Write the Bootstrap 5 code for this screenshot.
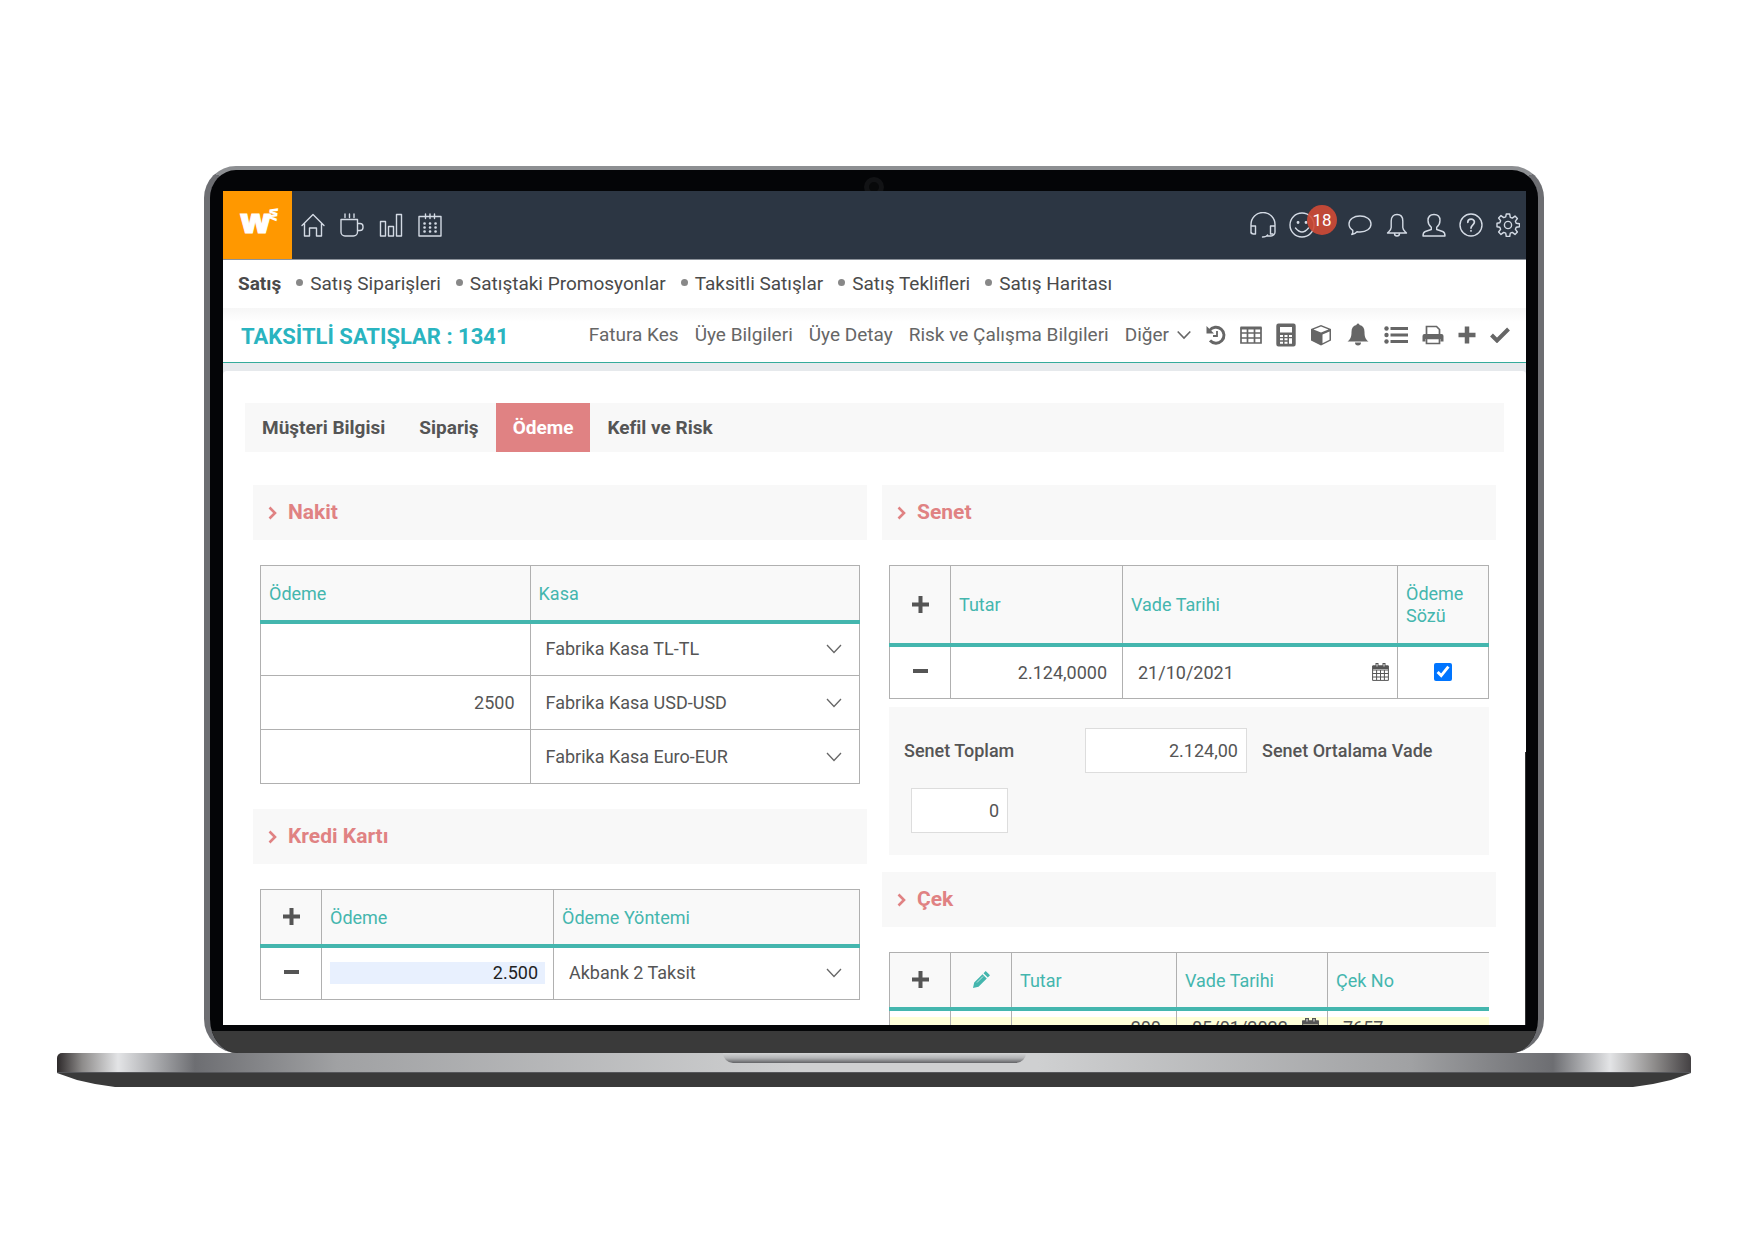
<!DOCTYPE html>
<html lang="tr">
<head>
<meta charset="utf-8">
<meta name="viewport" content="width=device-width, initial-scale=1">
<title>Taksitli Satışlar</title>
<link href="https://cdn.jsdelivr.net/npm/bootstrap@5.3.0/dist/css/bootstrap.min.css" rel="stylesheet">
<style>
  body { font-family: Roboto, "Liberation Sans", sans-serif; font-size: 18px; line-height: 24px; color: #555; background: #fff; }
  a { color: inherit; text-decoration: none; }
  svg { display: block; }
  .stage { padding: 166px 57px 0; }

  /* laptop */
  .lid { margin: 0 147px; border-style: solid; border-color: #8d8f92 #6d6e72 #6d6e72; border-width: 4px 6px 0; border-radius: 32px 32px 34px 34px; background: #040507; padding-top: 21px; position: relative; overflow: hidden; }
  .camera { width: 20px; height: 20px; border-radius: 50%; border: 5px solid #121315; background: #08090a; position: absolute; top: 7px; left: calc(50% - 10px); }
  .display { margin: 0 12px 0 13px; aspect-ratio: 1303 / 834; overflow: hidden; background: #fff; position: relative; }
  .thumb { position: absolute; right: 0; top: 561px; bottom: 0; width: 1px; background: #333; }
  .chin { margin-top: 6px; height: 22px; background: #3a3a3a; }
  .deck { height: 20px; border-radius: 5px 5px 0 0; border-bottom: 1px solid #55565a;
    background: linear-gradient(90deg, #2d292a 0, #8d8b8a 25px, #e3e4e6 61px, #6d6e72 138px, #a0a1a3 280px, #cfd0d1 45%, #cfd0d1 60%, #a0a1a3 calc(100% - 280px), #6d6e72 calc(100% - 138px), #e3e4e6 calc(100% - 81px), #8d8b8a calc(100% - 36px), #444143 100%); }
  .notch { width: 303px; height: 10px; border-radius: 0 0 10px 10px; background: linear-gradient(#d3d4d5, #b2b3b5 50%, #626366); }
  .foot { height: 14px; background: #3a3a3a; clip-path: polygon(0 0, 100% 0, calc(100% - 20px) 7px, calc(100% - 38px) 11px, calc(100% - 58px) 100%, 58px 100%, 38px 11px, 20px 7px); }

  /* top bar */
  .topbar { background: #2c3643; height: 69px; color: #d3dae4; border-bottom: 1px solid #8c929a; }
  .brand { width: 69px; height: 68px; background: #ff9800; color: #fff; }
  .brand text { font-family: "Open Sans", sans-serif; font-weight: 800; fill: #fff; stroke: #fff; }
  .topbar a { display: block; }
  .quick { gap: 15px; padding-left: 9px; }
  .status { gap: 13px; padding-right: 6px; }
  .counter { position: absolute; left: 18px; top: -7px; width: 30px; height: 30px; font-size: 17px; font-weight: 400; line-height: 30px; padding: 0; background: rgba(208, 74, 54, .9); }
  .mood { margin-right: 20px; }
  .ln { fill: none; stroke: currentColor; stroke-width: 1.4; stroke-linejoin: round; stroke-linecap: round; }

  /* menu rows */
  .crumbs { height: 48px; padding: 0 0 1px 15px; color: #4a4a4a; font-size: 19px; }
  .crumbs li + li::before { content: ""; display: inline-block; width: 7px; height: 7px; border-radius: 50%; background: #888; margin: 0 7px 4px 15px; }
  .crumbs li { white-space: nowrap; }
  .titlebar { height: 55px; padding: 0 16px 0 18px; background: linear-gradient(#f6f6f6, #fff 14px); border-bottom: 1px solid #35ab9b; color: #666; }
  .titlebar h1 { font-size: 22px; line-height: 28px; font-weight: 700; color: #2ab4c0; margin: 0; padding-top: 3px; }
  .acts { gap: 16px; white-space: nowrap; font-size: 19px; padding-bottom: 1px; }
  .tools { gap: 14px; padding-left: 15px; }
  .plain { background: none; border: 0; padding: 0; color: inherit; display: block; }
  .sheet { background: #e6e9ec; padding-top: 8px; }
  .page { background: #fff; border-radius: 4px 4px 0 0; padding: 32px 22px 0; }

  /* tabs */
  .tabs { background: #f8f8f8; }
  .tabs .nav-link { color: #555; font-size: 19px; font-weight: 700; padding: 13px 17px 12px; border-radius: 0; }
  .tabs .nav-link.active { background: #e08283; color: #fff; }

  /* sections */
  .cols { padding: 33px 8px 0; gap: 15px; }
  .cols > div { flex: 1 1 0; min-width: 0; }
  .sec { background: #f8f8f8; color: #e08283; font-size: 21px; line-height: 25px; font-weight: 700; margin: 0; padding: 15px 15px; gap: 11px; }
  .body-in { padding: 25px 7px 25px; }
  .grid { width: 100%; table-layout: fixed; border-collapse: collapse; color: #555; }
  .grid th, .grid td { border: 1px solid #b0b0b0; height: 54px; padding: 0 8px; vertical-align: middle; }
  .grid th { background: #f9f9f9; color: #44b6ae; font-weight: 400; height: 56px; padding-top: 2px; border-bottom: 4px solid #44b6ae; line-height: 22px; }
  .grid th.tall { height: 79px; }
  .grid .plain { margin: 0 auto; color: #555; }
  .grid th .plain { margin-bottom: 2px; }
  .grid .plain.teal { color: #44b6ae; }
  .cell { width: 100%; border: 0; background: transparent; color: #555; padding: 0 7px; height: 30px; outline: 0; }
  select.cell { appearance: none; background: url("data:image/svg+xml,%3Csvg xmlns='http://www.w3.org/2000/svg' viewBox='0 0 16 10'%3E%3Cpath d='M1 1l7 7.500 7-7.500' fill='none' stroke='%23666' stroke-width='1.300'/%3E%3C/svg%3E") no-repeat right 9px center / 16px 10px; }
  .filled { background: #e8f0fe; color: #222; height: 22px; }
  .tick { width: 18px; height: 18px; display: block; margin: 0 auto; accent-color: #0075ff; }
  .sum { background: #f8f8f8; margin-top: 8px; padding: 21px 15px 22px; gap: 15px; }
  .sum label { font-weight: 500; }
  .sum .first { width: 166px; }
  .box { border: 1px solid #ddd; background: #fff; height: 45px; width: 162px; padding: 0 8px; color: #555; }
  .box.sm { width: 97px; margin-left: 7px; }
  .after { padding-bottom: 17px; }
  .grid.cheques td { background: linear-gradient(#fff 6px, #ffffd9 6px); height: 36px; }
  .cheques tr > :last-child { border-right: 0; }
</style>
</head>
<body>
<main class="stage">
  <div class="lid">
    <div class="camera"></div>
    <div class="display">
      <header class="topbar d-flex align-items-center">
        <a class="brand" href="#" aria-label="W3">
          <svg width="69" height="68" viewBox="0 0 69 68"><text x="17" y="42" font-size="34" stroke-width="1">w</text><text x="47" y="16" font-size="15" stroke-width="0" transform="rotate(97 47 16)">w</text></svg>
        </a>
        <nav class="quick d-flex" aria-label="Kısayollar">
          <a href="#" aria-label="Ana sayfa"><svg class="ln" width="24" height="24" viewBox="0 0 24 24"><path d="M1 12.500L12 1.500l11 11M3.500 10.500v12.500h5v-8h7v8h5V10.500"/></svg></a>
          <a href="#" aria-label="Kahve"><svg class="ln" width="24" height="24" viewBox="0 0 24 24"><path d="M1 6.500h16.500V19a4 4 0 0 1-4 4H5a4 4 0 0 1-4-4zM17.500 10.500h2.500a3 3 0 0 1 3 3v1a3 3 0 0 1-3 3h-2.500M5 1v3.500M9.500 1v3.500M14 1v3.500"/></svg></a>
          <a href="#" aria-label="Raporlar"><svg class="ln" width="24" height="24" viewBox="0 0 24 24"><path d="M1.500 8.500h5V23h-5zM9.500 13.500h5V23h-5zM17.500 1.500h5V23h-5z"/></svg></a>
          <a href="#" aria-label="Takvim"><svg class="ln" width="24" height="24" viewBox="0 0 24 24"><path d="M1 3.500h22V23H1zM7.500 1v4.500M12 1v4.500M16.500 1v4.500"/><path d="M6.500 10.500h.1M12 10.500h.1M17.500 10.500h.1M6.500 14.500h.1M12 14.500h.1M17.500 14.500h.1M6.500 18.500h.1M12 18.500h.1M17.500 18.500h.1" stroke-width="2.600"/></svg></a>
        </nav>
        <nav class="status d-flex align-items-center ms-auto" aria-label="Durum">
          <a href="#" aria-label="Destek"><svg class="ln" width="26" height="26" viewBox="0 0 26 26"><path d="M1 21V12.500a12 12 0 0 1 24 0v7.500a4 4 0 0 1-4 4h-4M1 14h4.500v8H3.500A2.500 2.500 0 0 1 1 20zM25 14h-4.500v8H23M12.500 25q4 0 5-2"/></svg></a>
          <a class="mood position-relative" href="#" aria-label="Bildirim 18"><svg class="ln" width="26" height="26" viewBox="0 0 26 26"><circle cx="13" cy="13" r="12"/><path d="M6.500 16q6.500 8 13 0"/><path d="M9 10.500h.1M17 10.500h.1" stroke-width="2.800"/></svg><span class="counter badge rounded-circle">18</span></a>
          <a href="#" aria-label="Mesaj"><svg class="ln" width="24" height="24" viewBox="0 0 24 24"><path d="M12 3c6.300 0 11 3.400 11 8s-4.700 8-11 8c-1.200 0-2-.1-3-.3-1.400 1.600-3.200 2.700-5.200 2.800 1-1.300 1.300-2.700 1-4.200C2.400 15.800 1 13.600 1 11c0-4.600 4.700-8 11-8z"/></svg></a>
          <a href="#" aria-label="Alarm"><svg class="ln" width="24" height="24" viewBox="0 0 24 24"><path d="M12 1.500c3.600 0 5.800 2.500 5.800 6.500v6.500c0 2.500 1.700 3.500 3.700 5.500h-19c2-2 3.700-3 3.700-5.500V8c0-4 2.200-6.500 5.800-6.500zM9.500 20.500c0 3.300 5 3.300 5 0"/></svg></a>
          <a href="#" aria-label="Profil"><svg class="ln" width="24" height="24" viewBox="0 0 24 24"><path d="M12 1.500c4 0 6 2.500 6 6 0 3-1.500 5.200-3.300 6.800v2.200l6 2c1.600.6 2.300 2 2.300 4.500H1c0-2.500.7-3.900 2.300-4.500l6-2v-2.200C7.500 12.700 6 10.500 6 7.500c0-3.500 2-6 6-6z"/></svg></a>
          <a href="#" aria-label="Yardım"><svg class="ln" width="24" height="24" viewBox="0 0 24 24"><circle cx="12" cy="12" r="11"/><path d="M8.800 9.300c0-4.200 6.600-4.200 6.600-.2 0 2.600-3.400 2.900-3.400 6M12 17.700v.3" stroke-width="1.700"/></svg></a>
          <a href="#" aria-label="Ayarlar"><svg class="ln" width="24" height="24" viewBox="0 0 24 24"><circle cx="12" cy="12" r="3.600"/><path d="M10.300 1h3.400l.6 3.300 2 .8 2.700-2 2.400 2.400-2 2.700.8 2 3.300.6v2.900l-3.300.6-.8 2 2 2.700-2.400 2.400-2.700-2-2 .8-.6 3.300h-3.400l-.6-3.300-2-.8-2.700 2L2.600 19l2-2.700-.8-2L1 13.700v-3.400l2.800-.6.8-2-2-2.700L5 2.600l2.700 2 2-.8z"/></svg></a>
        </nav>
      </header>

      <nav aria-label="Satış menüsü">
        <ul class="crumbs list-unstyled d-flex align-items-center mb-0">
          <li><a class="fw-bold" href="#">Satış</a></li>
          <li><a href="#">Satış Siparişleri</a></li>
          <li><a href="#">Satıştaki Promosyonlar</a></li>
          <li><a href="#">Taksitli Satışlar</a></li>
          <li><a href="#">Satış Teklifleri</a></li>
          <li><a href="#">Satış Haritası</a></li>
        </ul>
      </nav>

      <div class="titlebar d-flex align-items-center">
        <h1 class="text-nowrap">TAKSİTLİ SATIŞLAR : 1341</h1>
        <nav class="acts d-flex ms-auto" aria-label="İşlemler">
          <a href="#">Fatura Kes</a>
          <a href="#">Üye Bilgileri</a>
          <a href="#">Üye Detay</a>
          <a href="#">Risk ve Çalışma Bilgileri</a>
          <a class="d-flex align-items-center" href="#">Diğer<svg class="ms-2" width="14" height="10" viewBox="0 0 14 10"><path d="M.7 1.500L7 8l6.300-6.500" fill="none" stroke="currentColor" stroke-width="1.600"/></svg></a>
        </nav>
        <div class="tools d-flex align-items-center">
          <button class="plain" aria-label="Geçmiş"><svg width="20" height="20" viewBox="0 0 20 20"><path d="M3.500 5.500A8 8 0 1 1 4 15.500" fill="none" stroke="currentColor" stroke-width="2.900"/><path d="M.5 1v7.500H8z" fill="currentColor"/><path d="M11 6v5H7" fill="none" stroke="currentColor" stroke-width="1.800"/></svg></button>
          <button class="plain" aria-label="Tablo"><svg width="22" height="20" viewBox="0 0 22 20"><path d="M1 3h20v15H1zM1 8h20M1 13h20M7.500 3v15M14.500 3v15" fill="none" stroke="currentColor" stroke-width="1.700"/><path d="M.5 1.500h21v3H.5z" fill="currentColor"/></svg></button>
          <button class="plain" aria-label="Hesap makinesi"><svg width="20" height="24" viewBox="0 0 20 24"><path fill="currentColor" fill-rule="evenodd" d="M2.500.5h15a2.200 2.200 0 0 1 2.200 2.200v18.600a2.200 2.200 0 0 1-2.200 2.200h-15A2.200 2.200 0 0 1 .3 21.300V2.700A2.200 2.200 0 0 1 2.500.5zM4 4v5.500h12V4zM4 12h3v2H4zM8.500 12h3v2h-3zM13 12h3v2h-3zM4 15.300h3v2H4zM8.500 15.300h3v2h-3zM13 15.300h3v5.400h-3zM4 18.700h3v2H4zM8.500 18.700h3v2h-3z"/></svg></button>
          <button class="plain" aria-label="Ürün"><svg width="22" height="22" viewBox="0 0 22 22"><path d="M11 1l10 4v11.500L11 21.500 1 16.500V5z" fill="currentColor"/><path d="M11 2.500l7.500 3L11 8.500l-7.500-3zM12.500 10.500l7-3v8.300l-7 3.400z" fill="#fff"/></svg></button>
          <button class="plain" aria-label="Uyarı"><svg width="24" height="24" viewBox="0 0 24 24"><path d="M12 .5a1.500 1.500 0 0 1 1.500 1.600c3.300.7 5 3.200 5 6.900 0 5 1 7.300 4 9.500H1.500c3-2.200 4-4.500 4-9.500 0-3.700 1.700-6.200 5-6.900A1.500 1.500 0 0 1 12 .5zM9 19.500h6a3 3 0 0 1-6 0z" fill="currentColor"/></svg></button>
          <button class="plain" aria-label="Liste"><svg width="24" height="20" viewBox="0 0 24 20"><path d="M6.500 3.500H24M6.500 10H24M6.500 16.500H24" stroke="currentColor" stroke-width="3"/><circle cx="2.500" cy="3.500" r="2.200" fill="currentColor"/><circle cx="2.500" cy="10" r="2.200" fill="currentColor"/><circle cx="2.500" cy="16.500" r="2.200" fill="currentColor"/></svg></button>
          <button class="plain" aria-label="Yazdır"><svg width="22" height="20" viewBox="0 0 22 20"><path d="M4.500 10V1.500h10l3 3V10" fill="none" stroke="currentColor" stroke-width="1.700"/><path d="M2.500 9h17a2 2 0 0 1 2 2v5.500h-3V14h-15v2.500h-3V11a2 2 0 0 1 2-2z" fill="currentColor"/><path d="M4.500 13.500h13v5h-13z" fill="#fff" stroke="currentColor" stroke-width="1.700"/></svg></button>
          <button class="plain" aria-label="Ekle"><svg width="18" height="18" viewBox="0 0 18 18"><path d="M9 .5v17M.5 9h17" stroke="currentColor" stroke-width="4.500"/></svg></button>
          <button class="plain" aria-label="Onayla"><svg width="20" height="16" viewBox="0 0 20 16"><path d="M1.500 8l5.500 5.500L18.500 2" fill="none" stroke="currentColor" stroke-width="4"/></svg></button>
        </div>
      </div>

      <div class="sheet">
        <div class="page">
          <ul class="tabs nav">
            <li class="nav-item"><a class="nav-link" href="#">Müşteri Bilgisi</a></li>
            <li class="nav-item"><a class="nav-link" href="#">Sipariş</a></li>
            <li class="nav-item"><a class="nav-link active" aria-current="page" href="#">Ödeme</a></li>
            <li class="nav-item"><a class="nav-link" href="#">Kefil ve Risk</a></li>
          </ul>

          <div class="cols d-flex">
            <div>
              <h2 class="sec d-flex align-items-center"><svg width="9" height="14" viewBox="0 0 9 14"><path d="M1.500 1.500L7 7l-5.500 5.500" fill="none" stroke="currentColor" stroke-width="2.600"/></svg>Nakit</h2>
              <div class="body-in">
                <table class="grid">
                  <colgroup><col style="width:45%"><col></colgroup>
                  <thead><tr><th>Ödeme</th><th>Kasa</th></tr></thead>
                  <tbody>
                    <tr><td><input class="cell text-end" aria-label="Ödeme TL" value=""></td><td><select class="cell" aria-label="Kasa TL"><option>Fabrika Kasa TL-TL</option></select></td></tr>
                    <tr><td><input class="cell text-end" aria-label="Ödeme USD" value="2500"></td><td><select class="cell" aria-label="Kasa USD"><option>Fabrika Kasa USD-USD</option></select></td></tr>
                    <tr><td><input class="cell text-end" aria-label="Ödeme EUR" value=""></td><td><select class="cell" aria-label="Kasa EUR"><option>Fabrika Kasa Euro-EUR</option></select></td></tr>
                  </tbody>
                </table>
              </div>
              <h2 class="sec d-flex align-items-center"><svg width="9" height="14" viewBox="0 0 9 14"><path d="M1.500 1.500L7 7l-5.500 5.500" fill="none" stroke="currentColor" stroke-width="2.600"/></svg>Kredi Kartı</h2>
              <div class="body-in">
                <table class="grid">
                  <colgroup><col style="width:61px"><col style="width:232px"><col></colgroup>
                  <thead><tr><th><button class="plain" aria-label="Satır ekle"><svg width="17" height="17" viewBox="0 0 17 17"><path d="M8.500 0v17M0 8.500h17" stroke="currentColor" stroke-width="4"/></svg></button></th><th>Ödeme</th><th>Ödeme Yöntemi</th></tr></thead>
                  <tbody>
                    <tr><td><button class="plain" aria-label="Satır sil"><svg width="15" height="16" viewBox="0 0 15 16"><path d="M0 7h15" stroke="currentColor" stroke-width="4"/></svg></button></td><td><input class="cell filled text-end" aria-label="Ödeme tutarı" value="2.500"></td><td><select class="cell" aria-label="Ödeme Yöntemi"><option>Akbank 2 Taksit</option></select></td></tr>
                  </tbody>
                </table>
              </div>
            </div>

            <div>
              <h2 class="sec d-flex align-items-center"><svg width="9" height="14" viewBox="0 0 9 14"><path d="M1.500 1.500L7 7l-5.500 5.500" fill="none" stroke="currentColor" stroke-width="2.600"/></svg>Senet</h2>
              <div class="body-in after">
                <table class="grid">
                  <colgroup><col style="width:61px"><col style="width:172px"><col><col style="width:91px"></colgroup>
                  <thead><tr><th class="tall"><button class="plain" aria-label="Senet ekle"><svg width="17" height="17" viewBox="0 0 17 17"><path d="M8.500 0v17M0 8.500h17" stroke="currentColor" stroke-width="4"/></svg></button></th><th>Tutar</th><th>Vade Tarihi</th><th>Ödeme Sözü</th></tr></thead>
                  <tbody>
                    <tr><td><button class="plain" aria-label="Senet sil"><svg width="15" height="16" viewBox="0 0 15 16"><path d="M0 7h15" stroke="currentColor" stroke-width="4"/></svg></button></td><td><input class="cell text-end" aria-label="Tutar" value="2.124,0000"></td>
                      <td><div class="d-flex align-items-center"><input class="cell" aria-label="Vade Tarihi" value="21/10/2021"><button class="plain" aria-label="Tarih seç"><svg width="17" height="18" viewBox="0 0 17 18"><path d="M.6 3h15.800v14.400H.600zM.6 7h15.800M.6 10.500h15.800M.6 14h15.800M4.600 7v10M8.500 7v10M12.400 7v10" fill="none" stroke="currentColor" stroke-width="1"/><path d="M.6 2.500h15.800V6H.600zM3.500 0h3v4h-3zM10.500 0h3v4h-3z" fill="currentColor"/><path d="M5 1v2.500M12 1v2.500" stroke="#fff" stroke-width=".9"/></svg></button></div></td>
                      <td><input class="tick" type="checkbox" aria-label="Ödeme Sözü" checked></td></tr>
                  </tbody>
                </table>
                <div class="sum d-flex flex-wrap align-items-center">
                  <label class="first" for="toplam">Senet Toplam</label>
                  <input class="box text-end" id="toplam" value="2.124,00">
                  <label for="ortalama">Senet Ortalama Vade</label>
                  <div class="w-100 d-flex"><input class="box sm text-end" id="ortalama" value="0"></div>
                </div>
              </div>
              <h2 class="sec d-flex align-items-center"><svg width="9" height="14" viewBox="0 0 9 14"><path d="M1.500 1.500L7 7l-5.500 5.500" fill="none" stroke="currentColor" stroke-width="2.600"/></svg>Çek</h2>
              <div class="body-in">
                <table class="grid cheques">
                  <colgroup><col style="width:61px"><col style="width:61px"><col style="width:165px"><col style="width:151px"><col></colgroup>
                  <thead><tr><th><button class="plain" aria-label="Çek ekle"><svg width="17" height="17" viewBox="0 0 17 17"><path d="M8.500 0v17M0 8.500h17" stroke="currentColor" stroke-width="4"/></svg></button></th><th><button class="plain teal" aria-label="Düzenle"><svg width="17" height="17" viewBox="0 0 17 17"><path d="M0 17l1.200-5.500L9.500 3.200 13.800 7.500 5.500 15.800zM10.500 2.200L12.700 0 17 4.300 14.800 6.500z" fill="currentColor"/><path d="M4 11.500l6-6" stroke="#f9f9f9" stroke-width=".7"/></svg></button></th><th>Tutar</th><th>Vade Tarihi</th><th>Çek No</th></tr></thead>
                  <tbody>
                    <tr><td></td><td></td><td><input class="cell text-end" aria-label="Çek tutarı" value="200"></td>
                      <td><div class="d-flex align-items-center"><input class="cell" aria-label="Çek vadesi" value="05/01/2022"><button class="plain" aria-label="Çek tarihi seç"><svg width="17" height="18" viewBox="0 0 17 18"><path d="M.6 3h15.800v14.400H.600z" fill="none" stroke="currentColor" stroke-width="1.100"/><path d="M.6 2.500h15.800V6.500H.600zM3 0h4v4h-4zM10 0h4v4h-4z" fill="currentColor"/><path d="M5 1v2.500M12 1v2.500" stroke="#fff" stroke-width=".9"/></svg></button></div></td>
                      <td><input class="cell" aria-label="Çek No" value="7657"></td></tr>
                  </tbody>
                </table>
              </div>
            </div>
          </div>
        </div>
      </div>
      <div class="thumb"></div>
    </div>
    <div class="chin"></div>
  </div>
  <div class="deck"><div class="notch mx-auto"></div></div>
  <div class="foot"></div>
</main>
<script src="https://cdn.jsdelivr.net/npm/bootstrap@5.3.0/dist/js/bootstrap.bundle.min.js"></script>
</body>
</html>
